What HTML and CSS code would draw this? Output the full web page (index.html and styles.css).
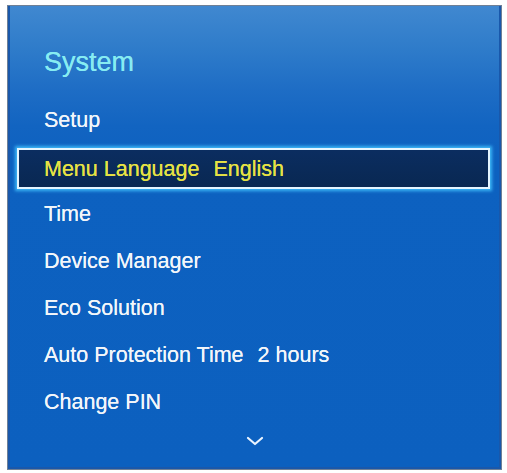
FILE: index.html
```html
<!DOCTYPE html>
<html lang="en">
<head>
<meta charset="utf-8">
<title>System</title>
<link rel="stylesheet" href="styles.css">
</head>
<body>
<div class="panel">
  <h1 class="title">System</h1>
  <ul class="menu">
    <li class="item">Setup</li>
    <li class="item active">Menu Language<span class="value">English</span></li>
    <li class="item">Time</li>
    <li class="item">Device Manager</li>
    <li class="item">Eco Solution</li>
    <li class="item">Auto Protection Time<span class="value">2 hours</span></li>
    <li class="item">Change PIN</li>
  </ul>
  <div class="more">
    <svg width="18" height="10" viewBox="0 0 18 10" aria-hidden="true">
      <path d="M2 2 L9 8 L16 2" fill="none" stroke="#eaf4ff" stroke-width="2.2" stroke-linecap="round" stroke-linejoin="round"/>
    </svg>
  </div>
</div>
</body>
</html>
```
FILE: styles.css
```css
html, body {
  margin: 0;
  padding: 0;
  background: #ffffff;
}

body {
  font-family: "Liberation Sans", Arial, sans-serif;
}

.panel {
  box-sizing: border-box;
  width: 495px;
  height: 465px;
  margin: 5px 0 0 7px;
  border: 1px solid #6f8096;
  background: linear-gradient(180deg, #4088d0 0%, #2f7cca 9%, #1e6dc5 18%, #1264c1 26%, #0d61c0 34%, #0c60bf 100%);
  box-shadow: inset 2px 0 0 #1958ab, inset -2px 0 0 #1958ab, inset 0 -2px 0 #1958ab;
  display: flex;
  flex-direction: column;
}

.title {
  margin: 0;
  padding: 36px 0 0 36px;
  height: 40px;
  line-height: 40px;
  font-size: 27px;
  font-weight: normal;
  color: #86ecf2;
  text-shadow: 0 0 0.5px #86ecf2;
}

.menu {
  list-style: none;
  margin: 15px 0 0 0;
  padding: 0;
}

.item {
  height: 47px;
  line-height: 47px;
  padding-left: 36px;
  font-size: 21.5px;
  color: #f2f6fa;
  text-shadow: 0 0 0.5px #f2f6fa;
  white-space: nowrap;
}

.value {
  margin-left: 14px;
}

.item.active {
  box-sizing: border-box;
  height: 41px;
  margin: 4px 11px 2px 9px;
  padding: 1px 0 0 25px;
  line-height: 37px;
  border: 2px solid #e4f5ff;
  background: linear-gradient(180deg, #0b2d60 0%, #092852 100%);
  box-shadow: 0 0 3px 2px #3cb6f6;
  color: #e6e244;
  text-shadow: 0 0 0.5px #e6e244;
}

.more {
  display: flex;
  justify-content: center;
  padding-top: 10px;
}
```
